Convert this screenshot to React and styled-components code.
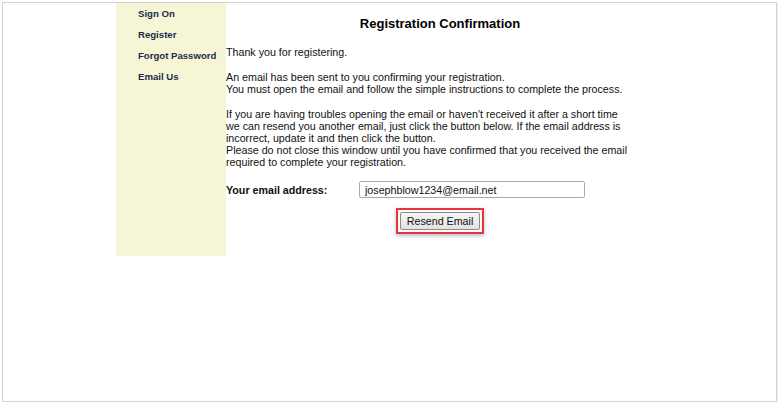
import React from "react";
import styled, { createGlobalStyle } from "styled-components";

const GlobalStyle = createGlobalStyle`
  html, body {
    margin: 0;
    padding: 0;
    background: #fff;
  }
  body {
    font-family: "Liberation Sans", Arial, sans-serif;
  }
`;

const Frame = styled.div`
  margin: 2px 3px 0 2px;
  height: 398px;
  border: 1px solid #d4d4d4;
  box-shadow: 1px 1px 1px rgba(0, 0, 0, 0.06);
  background: #fff;
`;

const Layout = styled.div`
  display: flex;
  align-items: flex-start;
  margin-left: 113px;
`;

const Sidebar = styled.nav`
  display: flex;
  flex-direction: column;
  gap: 8px;
  width: 110px;
  height: 253px;
  padding: 4px 0 0 22px;
  box-sizing: border-box;
  background: #f6f6d6;
`;

const NavLink = styled.a`
  font-size: 9.6px;
  font-weight: bold;
  line-height: 13px;
  color: #1d2b4c;
  text-decoration: none;
  white-space: nowrap;
`;

const Main = styled.main`
  width: 428px;
  font-size: 10.7px;
  line-height: 12px;
  color: #111;
`;

const Title = styled.h1`
  margin: 12px 0 13px;
  font-size: 13px;
  line-height: 18px;
  font-weight: bold;
  text-align: center;
  color: #000;
`;

const Para = styled.p`
  margin: 0 0 13px;
  white-space: nowrap;
`;

const EmailRow = styled.div`
  display: flex;
  align-items: center;
  margin-top: 7px;
`;

const Label = styled.label`
  width: 133px;
  font-weight: bold;
  font-size: 10.7px;
`;

const EmailInput = styled.input`
  width: 226px;
  height: 17px;
  box-sizing: border-box;
  padding: 0 5px;
  border: 1px solid #a9a9a9;
  border-radius: 2px;
  font-family: "Liberation Sans", Arial, sans-serif;
  font-size: 10.7px;
  color: #111;
`;

const ButtonRow = styled.div`
  display: flex;
  justify-content: center;
  margin-top: 10px;
`;

const Highlight = styled.div`
  padding: 2px;
  border: 2px solid #e8333c;
  box-shadow: 0 2px 4px rgba(0, 0, 0, 0.25);
`;

const ResendButton = styled.button`
  height: 18px;
  padding: 0 6px;
  border: 1px solid #8a8a8a;
  border-radius: 2px;
  background: linear-gradient(#f6f6f6, #e2e2e2);
  font-family: "Liberation Sans", Arial, sans-serif;
  font-size: 10.7px;
  color: #111;
  line-height: 14px;
`;

const links = ["Sign On", "Register", "Forgot Password", "Email Us"];

export default function App() {
  return (
    <>
      <GlobalStyle />
      <Frame>
        <Layout>
          <Sidebar>
            {links.map((l) => (
              <NavLink key={l} href="#">
                {l}
              </NavLink>
            ))}
          </Sidebar>
          <Main>
            <Title>Registration Confirmation</Title>
            <Para>Thank you for registering.</Para>
            <Para>
              An email has been sent to you confirming your registration.
              <br />
              You must open the email and follow the simple instructions to
              complete the process.
            </Para>
            <Para>
              If you are having troubles opening the email or haven't received
              it after a short time
              <br />
              we can resend you another email, just click the button below. If
              the email address is
              <br />
              incorrect, update it and then click the button.
              <br />
              Please do not close this window until you have confirmed that you
              received the email
              <br />
              required to complete your registration.
            </Para>
            <EmailRow>
              <Label htmlFor="email">Your email address:</Label>
              <EmailInput
                id="email"
                type="text"
                defaultValue="josephblow1234@email.net"
              />
            </EmailRow>
            <ButtonRow>
              <Highlight>
                <ResendButton type="button">Resend Email</ResendButton>
              </Highlight>
            </ButtonRow>
          </Main>
        </Layout>
      </Frame>
    </>
  );
}
